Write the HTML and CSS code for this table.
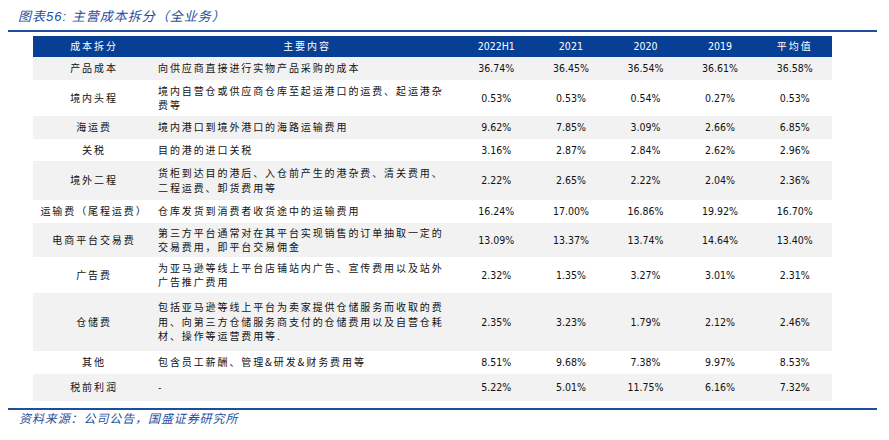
FILE: index.html
```html
<!DOCTYPE html>
<html lang="zh">
<head>
<meta charset="utf-8">
<link rel="stylesheet" href="styles.css">
</head>
<body>
<div class="page">
  <div class="title">图表56: 主营成本拆分（全业务）</div>
  <div class="rule"></div>
  <table class="tbl">
    <colgroup>
      <col class="c1"><col class="c2"><col class="cn"><col class="cn"><col class="cn"><col class="cn"><col class="cn">
    </colgroup>
    <thead>
      <tr class="head">
        <th class="zh">成本拆分</th>
        <th class="zh">主要内容</th>
        <th>2022H1</th>
        <th>2021</th>
        <th>2020</th>
        <th>2019</th>
        <th class="zh">平均值</th>
      </tr>
    </thead>
    <tbody>
      <tr class="g h23"><td class="name">产品成本</td><td class="desc">向供应商直接进行实物产品采购的成本</td><td>36.74%</td><td>36.45%</td><td>36.54%</td><td>36.61%</td><td>36.58%</td></tr>
      <tr class="h36"><td class="name">境内头程</td><td class="desc">境内自营仓或供应商仓库至起运港口的运费、起运港杂费等</td><td>0.53%</td><td>0.53%</td><td>0.54%</td><td>0.27%</td><td>0.53%</td></tr>
      <tr class="g h23"><td class="name">海运费</td><td class="desc">境内港口到境外港口的海路运输费用</td><td>9.62%</td><td>7.85%</td><td>3.09%</td><td>2.66%</td><td>6.85%</td></tr>
      <tr class="h22"><td class="name">关税</td><td class="desc">目的港的进口关税</td><td>3.16%</td><td>2.87%</td><td>2.84%</td><td>2.62%</td><td>2.96%</td></tr>
      <tr class="g h39"><td class="name">境外二程</td><td class="desc">货柜到达目的港后、入仓前产生的港杂费、清关费用、二程运费、卸货费用等</td><td>2.22%</td><td>2.65%</td><td>2.22%</td><td>2.04%</td><td>2.36%</td></tr>
      <tr class="h23"><td class="name">运输费（尾程运费）</td><td class="desc">仓库发货到消费者收货途中的运输费用</td><td>16.24%</td><td>17.00%</td><td>16.86%</td><td>19.92%</td><td>16.70%</td></tr>
      <tr class="g h34"><td class="name">电商平台交易费</td><td class="desc">第三方平台通常对在其平台实现销售的订单抽取一定的交易费用，即平台交易佣金</td><td>13.09%</td><td>13.37%</td><td>13.74%</td><td>14.64%</td><td>13.40%</td></tr>
      <tr class="h36"><td class="name">广告费</td><td class="desc">为亚马逊等线上平台店铺站内广告、宣传费用以及站外广告推广费用</td><td>2.32%</td><td>1.35%</td><td>3.27%</td><td>3.01%</td><td>2.31%</td></tr>
      <tr class="g h58"><td class="name">仓储费</td><td class="desc">包括亚马逊等线上平台为卖家提供仓储服务而收取的费用、向第三方仓储服务商支付的仓储费用以及自营仓耗材、操作等运营费用等.</td><td>2.35%</td><td>3.23%</td><td>1.79%</td><td>2.12%</td><td>2.46%</td></tr>
      <tr class="h23"><td class="name">其他</td><td class="desc">包含员工薪酬、管理&amp;研发&amp;财务费用等</td><td>8.51%</td><td>9.68%</td><td>7.38%</td><td>9.97%</td><td>8.53%</td></tr>
      <tr class="g h27"><td class="name">税前利润</td><td class="desc">-</td><td>5.22%</td><td>5.01%</td><td>11.75%</td><td>6.16%</td><td>7.32%</td></tr>
    </tbody>
  </table>
  <div class="rule bottom"></div>
  <div class="source">资料来源：公司公告，国盛证券研究所</div>
</div>
</body>
</html>
```

FILE: styles.css
```css
html, body {
  margin: 0;
  padding: 0;
  background: #ffffff;
}

.page {
  margin-left: 8px;
  width: 869px;
}

.title {
  height: 30px;
  box-sizing: border-box;
  padding: 10px 0 0 10px;
  line-height: 14px;
  font-family: "Liberation Sans", "Noto Sans CJK SC", sans-serif;
  font-size: 13px;
  font-style: italic;
  letter-spacing: 1px;
  color: #1f4e9e;
}

.rule {
  height: 2px;
  background: #1f4e9e;
}

.rule.bottom {
  margin-top: 7px;
}

.tbl {
  margin: 4px 0 0 25px;
  border-collapse: collapse;
  border-spacing: 0;
  table-layout: fixed;
  width: 799px;
  font-family: "DejaVu Sans Condensed", "Liberation Sans", sans-serif;
  font-size: 10.5px;
  color: #111111;
}

.c1 { width: 122px; }
.c2 { width: 304px; }
.cn { width: 74.6px; }

.tbl th,
.tbl td {
  padding: 0;
  text-align: center;
  vertical-align: middle;
  line-height: 14.5px;
}

.head th {
  height: 21px;
  background: #063f94;
  color: #ffffff;
  font-weight: normal;
}

.tbl .zh,
.tbl .name,
.tbl .desc {
  font-family: "Noto Sans CJK SC", sans-serif;
  font-size: 10px;
  letter-spacing: 1.9px;
}

.tbl .desc {
  text-align: left;
  padding: 0 10px 0 3px;
}

.g td { background: #f2f2f2; }

.h22 td { height: 22px; }
.h23 td { height: 23px; }
.h27 td { height: 27px; }
.h34 td { height: 34px; }
.h36 td { height: 36px; }
.h39 td { height: 39px; }
.h58 td { height: 58px; }

.source {
  margin-top: 1px;
  padding-left: 11px;
  line-height: 14px;
  font-family: "Noto Sans CJK SC", sans-serif;
  font-size: 12px;
  font-style: italic;
  letter-spacing: 0.9px;
  color: #1f4e9e;
}
```
